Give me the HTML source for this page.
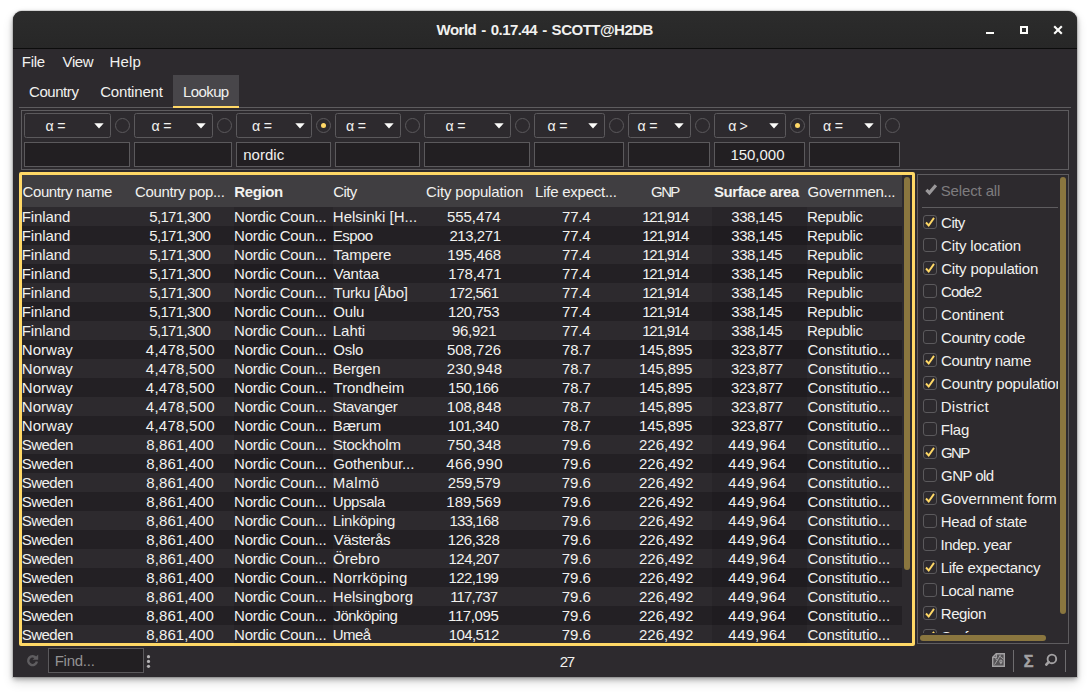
<!DOCTYPE html>
<html lang="en"><head><meta charset="utf-8"><title>World - 0.17.44 - SCOTT@H2DB</title>
<style>
html,body{margin:0;padding:0;}
body{width:1090px;height:693px;overflow:hidden;background:#fff;position:relative;
 font-family:"Liberation Sans","DejaVu Sans",sans-serif;font-size:15px;color:#f1f1ef;}
.t{position:absolute;white-space:pre;line-height:20px;height:20px;}
.win{position:absolute;left:13px;top:11px;width:1064px;height:666px;background:#2d2a2e;border-radius:9px 9px 0 0;
 box-shadow:0 0 0 1px rgba(0,0,0,.10),0 2px 5px rgba(0,0,0,.32),0 5px 11px rgba(0,0,0,.16);}
.tb{position:absolute;left:13px;top:11px;width:1064px;height:37px;border-radius:9px 9px 0 0;
 background:linear-gradient(#2c2c2c,#272727);border-bottom:1px solid #0c0c0c;}
.combo{box-sizing:border-box;border:1px solid #5b595c;border-radius:2.5px;background:#2d2a2e;}
.tf{box-sizing:border-box;border:1px solid #5b595c;background:#221f22;}
.radio{box-sizing:border-box;border:1px solid #5b595c;border-radius:50%;background:#2d2a2e;}
.cb{box-sizing:border-box;border:1px solid #5b595c;border-radius:3px;background:#2d2a2e;}
.clip{position:absolute;overflow:hidden;}
.sg{-webkit-text-stroke:0.5px #a3a1a3;}
svg{position:absolute;overflow:visible;}
</style></head><body>

<div class="win"></div><div class="tb"></div>
<header class="titlebar">
<div class="t" style="left:436.5px;top:20px;word-spacing:1.3px;font-weight:bold;letter-spacing:-0.50px">World - 0.17.44 - SCOTT@H2DB</div>
<div class="" style="position:absolute;left:986px;top:32px;width:8px;height:2px;background:#fcfcfa"></div>
<div class="" style="position:absolute;left:1020px;top:26px;width:8px;height:8px;box-sizing:border-box;border:2px solid #fcfcfa"></div>
<svg style="left:1053px;top:25px" width="10" height="10" viewBox="0 0 10 10"><path d="M1.2 1.2 L8.8 8.8 M8.8 1.2 L1.2 8.8" stroke="#fcfcfa" stroke-width="2.1" fill="none"/></svg>
</header>
<nav class="menubar">
<div class="t" style="left:21.7px;top:52px;letter-spacing:-0.22px">File</div>
<div class="t" style="left:62.5px;top:52px;letter-spacing:-0.35px">View</div>
<div class="t" style="left:109.5px;top:52px;letter-spacing:0.20px">Help</div>
</nav>
<div class="tabs">
<div class="" style="position:absolute;left:173px;top:75px;width:66px;height:33px;background:#48464a"></div>
<div class="" style="position:absolute;left:19px;top:107px;width:1052px;height:1px;background:#5e5c5f"></div>
<div class="" style="position:absolute;left:173px;top:106px;width:66px;height:2px;background:#ffd866"></div>
<div class="t" style="left:29.0px;top:82px;letter-spacing:-0.44px">Country</div>
<div class="t" style="left:100.2px;top:82px;letter-spacing:-0.19px">Continent</div>
<div class="t" style="left:183.1px;top:82px;letter-spacing:-0.62px">Lookup</div>
</div>
<section class="filters">
<div class="" style="position:absolute;left:21px;top:110px;width:1048px;height:60px;box-sizing:border-box;border:1px solid #5e5c5f"></div>
<div class="combo" style="position:absolute;left:24px;top:113px;width:87px;height:25px;"></div>
<div class="t" style="left:45.6px;top:115.6px;font-size:14.2px;word-spacing:-0.39px">α =</div>
<svg style="left:93.5px;top:123px" width="10" height="6" viewBox="0 0 10 6"><path d="M0.3 0.2 L9.7 0.2 L5 5.4 Z" fill="#fcfcfa"/></svg>
<div class="radio" style="position:absolute;left:115px;top:118px;width:15px;height:15px;"></div>
<div class="tf" style="position:absolute;left:24px;top:142px;width:106px;height:25px;"></div>
<div class="combo" style="position:absolute;left:134px;top:113px;width:79px;height:25px;"></div>
<div class="t" style="left:151.6px;top:115.6px;font-size:14.2px;word-spacing:-0.39px">α =</div>
<svg style="left:195.5px;top:123px" width="10" height="6" viewBox="0 0 10 6"><path d="M0.3 0.2 L9.7 0.2 L5 5.4 Z" fill="#fcfcfa"/></svg>
<div class="radio" style="position:absolute;left:217px;top:118px;width:15px;height:15px;"></div>
<div class="tf" style="position:absolute;left:134px;top:142px;width:98px;height:25px;"></div>
<div class="combo" style="position:absolute;left:236px;top:113px;width:76px;height:25px;"></div>
<div class="t" style="left:252.1px;top:115.6px;font-size:14.2px;word-spacing:-0.39px">α =</div>
<svg style="left:294.5px;top:123px" width="10" height="6" viewBox="0 0 10 6"><path d="M0.3 0.2 L9.7 0.2 L5 5.4 Z" fill="#fcfcfa"/></svg>
<div class="radio" style="position:absolute;left:316px;top:118px;width:15px;height:15px;"></div>
<div class="" style="position:absolute;left:320.8px;top:122.8px;width:5.4px;height:5.4px;background:#ffd866;border-radius:50%"></div>
<div class="tf" style="position:absolute;left:236px;top:142px;width:95px;height:25px;"></div>
<div class="combo" style="position:absolute;left:335px;top:113px;width:66px;height:25px;"></div>
<div class="t" style="left:346.1px;top:115.6px;font-size:14.2px;word-spacing:-0.39px">α =</div>
<svg style="left:383.5px;top:123px" width="10" height="6" viewBox="0 0 10 6"><path d="M0.3 0.2 L9.7 0.2 L5 5.4 Z" fill="#fcfcfa"/></svg>
<div class="radio" style="position:absolute;left:405px;top:118px;width:15px;height:15px;"></div>
<div class="tf" style="position:absolute;left:335px;top:142px;width:85px;height:25px;"></div>
<div class="combo" style="position:absolute;left:424px;top:113px;width:87px;height:25px;"></div>
<div class="t" style="left:445.6px;top:115.6px;font-size:14.2px;word-spacing:-0.39px">α =</div>
<svg style="left:493.5px;top:123px" width="10" height="6" viewBox="0 0 10 6"><path d="M0.3 0.2 L9.7 0.2 L5 5.4 Z" fill="#fcfcfa"/></svg>
<div class="radio" style="position:absolute;left:515px;top:118px;width:15px;height:15px;"></div>
<div class="tf" style="position:absolute;left:424px;top:142px;width:106px;height:25px;"></div>
<div class="combo" style="position:absolute;left:534px;top:113px;width:71px;height:25px;"></div>
<div class="t" style="left:547.6px;top:115.6px;font-size:14.2px;word-spacing:-0.39px">α =</div>
<svg style="left:587.5px;top:123px" width="10" height="6" viewBox="0 0 10 6"><path d="M0.3 0.2 L9.7 0.2 L5 5.4 Z" fill="#fcfcfa"/></svg>
<div class="radio" style="position:absolute;left:609px;top:118px;width:15px;height:15px;"></div>
<div class="tf" style="position:absolute;left:534px;top:142px;width:90px;height:25px;"></div>
<div class="combo" style="position:absolute;left:628px;top:113px;width:63px;height:25px;"></div>
<div class="t" style="left:637.6px;top:115.6px;font-size:14.2px;word-spacing:-0.39px">α =</div>
<svg style="left:673.5px;top:123px" width="10" height="6" viewBox="0 0 10 6"><path d="M0.3 0.2 L9.7 0.2 L5 5.4 Z" fill="#fcfcfa"/></svg>
<div class="radio" style="position:absolute;left:695px;top:118px;width:15px;height:15px;"></div>
<div class="tf" style="position:absolute;left:628px;top:142px;width:82px;height:25px;"></div>
<div class="combo" style="position:absolute;left:714px;top:113px;width:72px;height:25px;"></div>
<div class="t" style="left:728.2px;top:115.6px;font-size:14.2px;word-spacing:-0.79px">α &gt;</div>
<svg style="left:768.5px;top:123px" width="10" height="6" viewBox="0 0 10 6"><path d="M0.3 0.2 L9.7 0.2 L5 5.4 Z" fill="#fcfcfa"/></svg>
<div class="radio" style="position:absolute;left:790px;top:118px;width:15px;height:15px;"></div>
<div class="" style="position:absolute;left:794.8px;top:122.8px;width:5.4px;height:5.4px;background:#ffd866;border-radius:50%"></div>
<div class="tf" style="position:absolute;left:714px;top:142px;width:91px;height:25px;"></div>
<div class="combo" style="position:absolute;left:809px;top:113px;width:72px;height:25px;"></div>
<div class="t" style="left:823.1px;top:115.6px;font-size:14.2px;word-spacing:-0.39px">α =</div>
<svg style="left:863.5px;top:123px" width="10" height="6" viewBox="0 0 10 6"><path d="M0.3 0.2 L9.7 0.2 L5 5.4 Z" fill="#fcfcfa"/></svg>
<div class="radio" style="position:absolute;left:885px;top:118px;width:15px;height:15px;"></div>
<div class="tf" style="position:absolute;left:809px;top:142px;width:91px;height:25px;"></div>
<div class="t" style="left:243.2px;top:144.6px;letter-spacing:0.03px">nordic</div>
<div class="t" style="left:730.4px;top:144.6px;letter-spacing:-0.02px">150,000</div>
</section>
<section class="table">
<div class="" style="position:absolute;left:19px;top:172px;width:896px;height:474px;box-sizing:border-box;border:3px solid #ffd866;border-radius:2px;background:#2d2a2e"></div>
<div class="clip" style="left:22px;top:175px;width:890px;height:468px;">
<div class="" style="position:absolute;left:0px;top:0px;width:880px;height:32px;background:#403e41"></div>
<div class="" style="position:absolute;left:0px;top:32px;width:880px;height:19px;background:#2d2a2e"></div>
<div class="" style="position:absolute;left:212px;top:32px;width:99px;height:19px;background:rgba(0,0,0,.10)"></div>
<div class="" style="position:absolute;left:690px;top:32px;width:95px;height:19px;background:rgba(0,0,0,.10)"></div>
<div class="" style="position:absolute;left:0px;top:51px;width:880px;height:19px;background:#232024"></div>
<div class="" style="position:absolute;left:212px;top:51px;width:99px;height:19px;background:rgba(0,0,0,.10)"></div>
<div class="" style="position:absolute;left:690px;top:51px;width:95px;height:19px;background:rgba(0,0,0,.10)"></div>
<div class="" style="position:absolute;left:0px;top:70px;width:880px;height:19px;background:#2d2a2e"></div>
<div class="" style="position:absolute;left:212px;top:70px;width:99px;height:19px;background:rgba(0,0,0,.10)"></div>
<div class="" style="position:absolute;left:690px;top:70px;width:95px;height:19px;background:rgba(0,0,0,.10)"></div>
<div class="" style="position:absolute;left:0px;top:89px;width:880px;height:19px;background:#232024"></div>
<div class="" style="position:absolute;left:212px;top:89px;width:99px;height:19px;background:rgba(0,0,0,.10)"></div>
<div class="" style="position:absolute;left:690px;top:89px;width:95px;height:19px;background:rgba(0,0,0,.10)"></div>
<div class="" style="position:absolute;left:0px;top:108px;width:880px;height:19px;background:#2d2a2e"></div>
<div class="" style="position:absolute;left:212px;top:108px;width:99px;height:19px;background:rgba(0,0,0,.10)"></div>
<div class="" style="position:absolute;left:690px;top:108px;width:95px;height:19px;background:rgba(0,0,0,.10)"></div>
<div class="" style="position:absolute;left:0px;top:127px;width:880px;height:19px;background:#232024"></div>
<div class="" style="position:absolute;left:212px;top:127px;width:99px;height:19px;background:rgba(0,0,0,.10)"></div>
<div class="" style="position:absolute;left:690px;top:127px;width:95px;height:19px;background:rgba(0,0,0,.10)"></div>
<div class="" style="position:absolute;left:0px;top:146px;width:880px;height:19px;background:#2d2a2e"></div>
<div class="" style="position:absolute;left:212px;top:146px;width:99px;height:19px;background:rgba(0,0,0,.10)"></div>
<div class="" style="position:absolute;left:690px;top:146px;width:95px;height:19px;background:rgba(0,0,0,.10)"></div>
<div class="" style="position:absolute;left:0px;top:165px;width:880px;height:19px;background:#232024"></div>
<div class="" style="position:absolute;left:212px;top:165px;width:99px;height:19px;background:rgba(0,0,0,.10)"></div>
<div class="" style="position:absolute;left:690px;top:165px;width:95px;height:19px;background:rgba(0,0,0,.10)"></div>
<div class="" style="position:absolute;left:0px;top:184px;width:880px;height:19px;background:#2d2a2e"></div>
<div class="" style="position:absolute;left:212px;top:184px;width:99px;height:19px;background:rgba(0,0,0,.10)"></div>
<div class="" style="position:absolute;left:690px;top:184px;width:95px;height:19px;background:rgba(0,0,0,.10)"></div>
<div class="" style="position:absolute;left:0px;top:203px;width:880px;height:19px;background:#232024"></div>
<div class="" style="position:absolute;left:212px;top:203px;width:99px;height:19px;background:rgba(0,0,0,.10)"></div>
<div class="" style="position:absolute;left:690px;top:203px;width:95px;height:19px;background:rgba(0,0,0,.10)"></div>
<div class="" style="position:absolute;left:0px;top:222px;width:880px;height:19px;background:#2d2a2e"></div>
<div class="" style="position:absolute;left:212px;top:222px;width:99px;height:19px;background:rgba(0,0,0,.10)"></div>
<div class="" style="position:absolute;left:690px;top:222px;width:95px;height:19px;background:rgba(0,0,0,.10)"></div>
<div class="" style="position:absolute;left:0px;top:241px;width:880px;height:19px;background:#232024"></div>
<div class="" style="position:absolute;left:212px;top:241px;width:99px;height:19px;background:rgba(0,0,0,.10)"></div>
<div class="" style="position:absolute;left:690px;top:241px;width:95px;height:19px;background:rgba(0,0,0,.10)"></div>
<div class="" style="position:absolute;left:0px;top:260px;width:880px;height:19px;background:#2d2a2e"></div>
<div class="" style="position:absolute;left:212px;top:260px;width:99px;height:19px;background:rgba(0,0,0,.10)"></div>
<div class="" style="position:absolute;left:690px;top:260px;width:95px;height:19px;background:rgba(0,0,0,.10)"></div>
<div class="" style="position:absolute;left:0px;top:279px;width:880px;height:19px;background:#232024"></div>
<div class="" style="position:absolute;left:212px;top:279px;width:99px;height:19px;background:rgba(0,0,0,.10)"></div>
<div class="" style="position:absolute;left:690px;top:279px;width:95px;height:19px;background:rgba(0,0,0,.10)"></div>
<div class="" style="position:absolute;left:0px;top:298px;width:880px;height:19px;background:#2d2a2e"></div>
<div class="" style="position:absolute;left:212px;top:298px;width:99px;height:19px;background:rgba(0,0,0,.10)"></div>
<div class="" style="position:absolute;left:690px;top:298px;width:95px;height:19px;background:rgba(0,0,0,.10)"></div>
<div class="" style="position:absolute;left:0px;top:317px;width:880px;height:19px;background:#232024"></div>
<div class="" style="position:absolute;left:212px;top:317px;width:99px;height:19px;background:rgba(0,0,0,.10)"></div>
<div class="" style="position:absolute;left:690px;top:317px;width:95px;height:19px;background:rgba(0,0,0,.10)"></div>
<div class="" style="position:absolute;left:0px;top:336px;width:880px;height:19px;background:#2d2a2e"></div>
<div class="" style="position:absolute;left:212px;top:336px;width:99px;height:19px;background:rgba(0,0,0,.10)"></div>
<div class="" style="position:absolute;left:690px;top:336px;width:95px;height:19px;background:rgba(0,0,0,.10)"></div>
<div class="" style="position:absolute;left:0px;top:355px;width:880px;height:19px;background:#232024"></div>
<div class="" style="position:absolute;left:212px;top:355px;width:99px;height:19px;background:rgba(0,0,0,.10)"></div>
<div class="" style="position:absolute;left:690px;top:355px;width:95px;height:19px;background:rgba(0,0,0,.10)"></div>
<div class="" style="position:absolute;left:0px;top:374px;width:880px;height:19px;background:#2d2a2e"></div>
<div class="" style="position:absolute;left:212px;top:374px;width:99px;height:19px;background:rgba(0,0,0,.10)"></div>
<div class="" style="position:absolute;left:690px;top:374px;width:95px;height:19px;background:rgba(0,0,0,.10)"></div>
<div class="" style="position:absolute;left:0px;top:393px;width:880px;height:19px;background:#232024"></div>
<div class="" style="position:absolute;left:212px;top:393px;width:99px;height:19px;background:rgba(0,0,0,.10)"></div>
<div class="" style="position:absolute;left:690px;top:393px;width:95px;height:19px;background:rgba(0,0,0,.10)"></div>
<div class="" style="position:absolute;left:0px;top:412px;width:880px;height:19px;background:#2d2a2e"></div>
<div class="" style="position:absolute;left:212px;top:412px;width:99px;height:19px;background:rgba(0,0,0,.10)"></div>
<div class="" style="position:absolute;left:690px;top:412px;width:95px;height:19px;background:rgba(0,0,0,.10)"></div>
<div class="" style="position:absolute;left:0px;top:431px;width:880px;height:19px;background:#232024"></div>
<div class="" style="position:absolute;left:212px;top:431px;width:99px;height:19px;background:rgba(0,0,0,.10)"></div>
<div class="" style="position:absolute;left:690px;top:431px;width:95px;height:19px;background:rgba(0,0,0,.10)"></div>
<div class="" style="position:absolute;left:0px;top:450px;width:880px;height:19px;background:#2d2a2e"></div>
<div class="" style="position:absolute;left:212px;top:450px;width:99px;height:19px;background:rgba(0,0,0,.10)"></div>
<div class="" style="position:absolute;left:690px;top:450px;width:95px;height:19px;background:rgba(0,0,0,.10)"></div>
<div class="t" style="left:0.5px;top:7.3px;letter-spacing:-0.39px">Country name</div>
<div class="t" style="left:113.0px;top:7.3px;letter-spacing:-0.34px">Country pop...</div>
<div class="t" style="left:212.3px;top:7.3px;font-weight:bold;letter-spacing:-0.41px">Region</div>
<div class="t" style="left:311.3px;top:7.3px;letter-spacing:-0.64px">City</div>
<div class="t" style="left:404.1px;top:7.3px;letter-spacing:-0.15px">City population</div>
<div class="t" style="left:513.1px;top:7.3px;letter-spacing:-0.25px">Life expect...</div>
<div class="t" style="left:629.1px;top:7.3px;letter-spacing:-1.61px">GNP</div>
<div class="t" style="left:692.0px;top:7.3px;font-weight:bold;letter-spacing:-0.43px">Surface area</div>
<div class="t" style="left:785.6px;top:7.3px;letter-spacing:-0.27px">Governmen...</div>
<div class="t" style="left:-0.2px;top:31.5px;letter-spacing:-0.12px">Finland</div>
<div class="t" style="left:127.2px;top:31.5px;letter-spacing:-0.65px">5,171,300</div>
<div class="t" style="left:212.1px;top:31.5px;letter-spacing:-0.26px">Nordic Coun...</div>
<div class="t" style="left:310.8px;top:31.5px;letter-spacing:0.01px">Helsinki [H...</div>
<div class="t" style="left:425.1px;top:31.5px;letter-spacing:-0.10px">555,474</div>
<div class="t" style="left:540.1px;top:31.5px;letter-spacing:-0.26px">77.4</div>
<div class="t" style="left:620.2px;top:31.5px;letter-spacing:-1.17px">121,914</div>
<div class="t" style="left:709.3px;top:31.5px;letter-spacing:-0.47px">338,145</div>
<div class="t" style="left:785.1px;top:31.5px;letter-spacing:-0.36px">Republic</div>
<div class="t" style="left:-0.2px;top:50.5px;letter-spacing:-0.12px">Finland</div>
<div class="t" style="left:127.2px;top:50.5px;letter-spacing:-0.65px">5,171,300</div>
<div class="t" style="left:212.1px;top:50.5px;letter-spacing:-0.26px">Nordic Coun...</div>
<div class="t" style="left:310.8px;top:50.5px;letter-spacing:-0.54px">Espoo</div>
<div class="t" style="left:427.4px;top:50.5px;letter-spacing:-0.44px">213,271</div>
<div class="t" style="left:540.1px;top:50.5px;letter-spacing:-0.26px">77.4</div>
<div class="t" style="left:620.2px;top:50.5px;letter-spacing:-1.17px">121,914</div>
<div class="t" style="left:709.3px;top:50.5px;letter-spacing:-0.47px">338,145</div>
<div class="t" style="left:785.1px;top:50.5px;letter-spacing:-0.36px">Republic</div>
<div class="t" style="left:-0.2px;top:69.5px;letter-spacing:-0.12px">Finland</div>
<div class="t" style="left:127.2px;top:69.5px;letter-spacing:-0.65px">5,171,300</div>
<div class="t" style="left:212.1px;top:69.5px;letter-spacing:-0.26px">Nordic Coun...</div>
<div class="t" style="left:311.6px;top:69.5px;letter-spacing:-0.09px">Tampere</div>
<div class="t" style="left:425.2px;top:69.5px;letter-spacing:-0.06px">195,468</div>
<div class="t" style="left:540.1px;top:69.5px;letter-spacing:-0.26px">77.4</div>
<div class="t" style="left:620.2px;top:69.5px;letter-spacing:-1.17px">121,914</div>
<div class="t" style="left:709.3px;top:69.5px;letter-spacing:-0.47px">338,145</div>
<div class="t" style="left:785.1px;top:69.5px;letter-spacing:-0.36px">Republic</div>
<div class="t" style="left:-0.2px;top:88.5px;letter-spacing:-0.12px">Finland</div>
<div class="t" style="left:127.2px;top:88.5px;letter-spacing:-0.65px">5,171,300</div>
<div class="t" style="left:212.1px;top:88.5px;letter-spacing:-0.26px">Nordic Coun...</div>
<div class="t" style="left:311.7px;top:88.5px;letter-spacing:-0.20px">Vantaa</div>
<div class="t" style="left:426.2px;top:88.5px;letter-spacing:-0.14px">178,471</div>
<div class="t" style="left:540.1px;top:88.5px;letter-spacing:-0.26px">77.4</div>
<div class="t" style="left:620.2px;top:88.5px;letter-spacing:-1.17px">121,914</div>
<div class="t" style="left:709.3px;top:88.5px;letter-spacing:-0.47px">338,145</div>
<div class="t" style="left:785.1px;top:88.5px;letter-spacing:-0.36px">Republic</div>
<div class="t" style="left:-0.2px;top:107.5px;letter-spacing:-0.12px">Finland</div>
<div class="t" style="left:127.2px;top:107.5px;letter-spacing:-0.65px">5,171,300</div>
<div class="t" style="left:212.1px;top:107.5px;letter-spacing:-0.26px">Nordic Coun...</div>
<div class="t" style="left:311.6px;top:107.5px;letter-spacing:-0.27px">Turku [Åbo]</div>
<div class="t" style="left:427.2px;top:107.5px;letter-spacing:-0.73px">172,561</div>
<div class="t" style="left:540.1px;top:107.5px;letter-spacing:-0.26px">77.4</div>
<div class="t" style="left:620.2px;top:107.5px;letter-spacing:-1.17px">121,914</div>
<div class="t" style="left:709.3px;top:107.5px;letter-spacing:-0.47px">338,145</div>
<div class="t" style="left:785.1px;top:107.5px;letter-spacing:-0.36px">Republic</div>
<div class="t" style="left:-0.2px;top:126.5px;letter-spacing:-0.12px">Finland</div>
<div class="t" style="left:127.2px;top:126.5px;letter-spacing:-0.65px">5,171,300</div>
<div class="t" style="left:212.1px;top:126.5px;letter-spacing:-0.26px">Nordic Coun...</div>
<div class="t" style="left:311.2px;top:126.5px;letter-spacing:-0.14px">Oulu</div>
<div class="t" style="left:426.0px;top:126.5px;letter-spacing:-0.45px">120,753</div>
<div class="t" style="left:540.1px;top:126.5px;letter-spacing:-0.26px">77.4</div>
<div class="t" style="left:620.2px;top:126.5px;letter-spacing:-1.17px">121,914</div>
<div class="t" style="left:709.3px;top:126.5px;letter-spacing:-0.47px">338,145</div>
<div class="t" style="left:785.1px;top:126.5px;letter-spacing:-0.36px">Republic</div>
<div class="t" style="left:-0.2px;top:145.5px;letter-spacing:-0.12px">Finland</div>
<div class="t" style="left:127.2px;top:145.5px;letter-spacing:-0.65px">5,171,300</div>
<div class="t" style="left:212.1px;top:145.5px;letter-spacing:-0.26px">Nordic Coun...</div>
<div class="t" style="left:310.8px;top:145.5px;letter-spacing:-0.03px">Lahti</div>
<div class="t" style="left:429.9px;top:145.5px;letter-spacing:-0.25px">96,921</div>
<div class="t" style="left:540.1px;top:145.5px;letter-spacing:-0.26px">77.4</div>
<div class="t" style="left:620.2px;top:145.5px;letter-spacing:-1.17px">121,914</div>
<div class="t" style="left:709.3px;top:145.5px;letter-spacing:-0.47px">338,145</div>
<div class="t" style="left:785.1px;top:145.5px;letter-spacing:-0.36px">Republic</div>
<div class="t" style="left:-0.2px;top:164.5px;letter-spacing:0.02px">Norway</div>
<div class="t" style="left:123.8px;top:164.5px;letter-spacing:0.27px">4,478,500</div>
<div class="t" style="left:212.1px;top:164.5px;letter-spacing:-0.26px">Nordic Coun...</div>
<div class="t" style="left:311.2px;top:164.5px;letter-spacing:-0.22px">Oslo</div>
<div class="t" style="left:424.9px;top:164.5px">508,726</div>
<div class="t" style="left:540.0px;top:164.5px;letter-spacing:-0.08px">78.7</div>
<div class="t" style="left:617.0px;top:164.5px;letter-spacing:-0.14px">145,895</div>
<div class="t" style="left:709.0px;top:164.5px;letter-spacing:-0.34px">323,877</div>
<div class="t" style="left:785.5px;top:164.5px;letter-spacing:-0.06px">Constitutio...</div>
<div class="t" style="left:-0.2px;top:183.5px;letter-spacing:0.02px">Norway</div>
<div class="t" style="left:123.8px;top:183.5px;letter-spacing:0.27px">4,478,500</div>
<div class="t" style="left:212.1px;top:183.5px;letter-spacing:-0.26px">Nordic Coun...</div>
<div class="t" style="left:310.8px;top:183.5px;letter-spacing:-0.13px">Bergen</div>
<div class="t" style="left:424.7px;top:183.5px;letter-spacing:0.18px">230,948</div>
<div class="t" style="left:540.0px;top:183.5px;letter-spacing:-0.08px">78.7</div>
<div class="t" style="left:617.0px;top:183.5px;letter-spacing:-0.14px">145,895</div>
<div class="t" style="left:709.0px;top:183.5px;letter-spacing:-0.34px">323,877</div>
<div class="t" style="left:785.5px;top:183.5px;letter-spacing:-0.06px">Constitutio...</div>
<div class="t" style="left:-0.2px;top:202.5px;letter-spacing:0.02px">Norway</div>
<div class="t" style="left:123.8px;top:202.5px;letter-spacing:0.27px">4,478,500</div>
<div class="t" style="left:212.1px;top:202.5px;letter-spacing:-0.26px">Nordic Coun...</div>
<div class="t" style="left:311.6px;top:202.5px;letter-spacing:-0.06px">Trondheim</div>
<div class="t" style="left:426.0px;top:202.5px;letter-spacing:-0.55px">150,166</div>
<div class="t" style="left:540.0px;top:202.5px;letter-spacing:-0.08px">78.7</div>
<div class="t" style="left:617.0px;top:202.5px;letter-spacing:-0.14px">145,895</div>
<div class="t" style="left:709.0px;top:202.5px;letter-spacing:-0.34px">323,877</div>
<div class="t" style="left:785.5px;top:202.5px;letter-spacing:-0.06px">Constitutio...</div>
<div class="t" style="left:-0.2px;top:221.5px;letter-spacing:0.02px">Norway</div>
<div class="t" style="left:123.8px;top:221.5px;letter-spacing:0.27px">4,478,500</div>
<div class="t" style="left:212.1px;top:221.5px;letter-spacing:-0.26px">Nordic Coun...</div>
<div class="t" style="left:310.7px;top:221.5px;letter-spacing:-0.43px">Stavanger</div>
<div class="t" style="left:424.8px;top:221.5px;letter-spacing:0.04px">108,848</div>
<div class="t" style="left:540.0px;top:221.5px;letter-spacing:-0.08px">78.7</div>
<div class="t" style="left:617.0px;top:221.5px;letter-spacing:-0.14px">145,895</div>
<div class="t" style="left:709.0px;top:221.5px;letter-spacing:-0.34px">323,877</div>
<div class="t" style="left:785.5px;top:221.5px;letter-spacing:-0.06px">Constitutio...</div>
<div class="t" style="left:-0.2px;top:240.5px;letter-spacing:0.02px">Norway</div>
<div class="t" style="left:123.8px;top:240.5px;letter-spacing:0.27px">4,478,500</div>
<div class="t" style="left:212.1px;top:240.5px;letter-spacing:-0.26px">Nordic Coun...</div>
<div class="t" style="left:310.8px;top:240.5px;letter-spacing:-0.16px">Bærum</div>
<div class="t" style="left:426.0px;top:240.5px;letter-spacing:-0.54px">101,340</div>
<div class="t" style="left:540.0px;top:240.5px;letter-spacing:-0.08px">78.7</div>
<div class="t" style="left:617.0px;top:240.5px;letter-spacing:-0.14px">145,895</div>
<div class="t" style="left:709.0px;top:240.5px;letter-spacing:-0.34px">323,877</div>
<div class="t" style="left:785.5px;top:240.5px;letter-spacing:-0.06px">Constitutio...</div>
<div class="t" style="left:-0.3px;top:259.5px;letter-spacing:-0.52px">Sweden</div>
<div class="t" style="left:124.3px;top:259.5px;letter-spacing:0.09px">8,861,400</div>
<div class="t" style="left:212.1px;top:259.5px;letter-spacing:-0.26px">Nordic Coun...</div>
<div class="t" style="left:310.7px;top:259.5px;letter-spacing:-0.22px">Stockholm</div>
<div class="t" style="left:425.1px;top:259.5px;letter-spacing:-0.03px">750,348</div>
<div class="t" style="left:539.7px;top:259.5px;letter-spacing:0.01px">79.6</div>
<div class="t" style="left:617.0px;top:259.5px;letter-spacing:0.01px">226,492</div>
<div class="t" style="left:706.3px;top:259.5px;letter-spacing:0.57px">449,964</div>
<div class="t" style="left:785.5px;top:259.5px;letter-spacing:-0.06px">Constitutio...</div>
<div class="t" style="left:-0.3px;top:278.5px;letter-spacing:-0.52px">Sweden</div>
<div class="t" style="left:124.3px;top:278.5px;letter-spacing:0.09px">8,861,400</div>
<div class="t" style="left:212.1px;top:278.5px;letter-spacing:-0.26px">Nordic Coun...</div>
<div class="t" style="left:311.2px;top:278.5px;letter-spacing:-0.13px">Gothenbur...</div>
<div class="t" style="left:424.3px;top:278.5px;letter-spacing:0.34px">466,990</div>
<div class="t" style="left:539.7px;top:278.5px;letter-spacing:0.01px">79.6</div>
<div class="t" style="left:617.0px;top:278.5px;letter-spacing:0.01px">226,492</div>
<div class="t" style="left:706.3px;top:278.5px;letter-spacing:0.57px">449,964</div>
<div class="t" style="left:785.5px;top:278.5px;letter-spacing:-0.06px">Constitutio...</div>
<div class="t" style="left:-0.3px;top:297.5px;letter-spacing:-0.52px">Sweden</div>
<div class="t" style="left:124.3px;top:297.5px;letter-spacing:0.09px">8,861,400</div>
<div class="t" style="left:212.1px;top:297.5px;letter-spacing:-0.26px">Nordic Coun...</div>
<div class="t" style="left:310.8px;top:297.5px;letter-spacing:0.32px">Malmö</div>
<div class="t" style="left:425.8px;top:297.5px;letter-spacing:-0.22px">259,579</div>
<div class="t" style="left:539.7px;top:297.5px;letter-spacing:0.01px">79.6</div>
<div class="t" style="left:617.0px;top:297.5px;letter-spacing:0.01px">226,492</div>
<div class="t" style="left:706.3px;top:297.5px;letter-spacing:0.57px">449,964</div>
<div class="t" style="left:785.5px;top:297.5px;letter-spacing:-0.06px">Constitutio...</div>
<div class="t" style="left:-0.3px;top:316.5px;letter-spacing:-0.52px">Sweden</div>
<div class="t" style="left:124.3px;top:316.5px;letter-spacing:0.09px">8,861,400</div>
<div class="t" style="left:212.1px;top:316.5px;letter-spacing:-0.26px">Nordic Coun...</div>
<div class="t" style="left:310.7px;top:316.5px;letter-spacing:-0.39px">Uppsala</div>
<div class="t" style="left:424.2px;top:316.5px;letter-spacing:0.10px">189,569</div>
<div class="t" style="left:539.7px;top:316.5px;letter-spacing:0.01px">79.6</div>
<div class="t" style="left:617.0px;top:316.5px;letter-spacing:0.01px">226,492</div>
<div class="t" style="left:706.3px;top:316.5px;letter-spacing:0.57px">449,964</div>
<div class="t" style="left:785.5px;top:316.5px;letter-spacing:-0.06px">Constitutio...</div>
<div class="t" style="left:-0.3px;top:335.5px;letter-spacing:-0.52px">Sweden</div>
<div class="t" style="left:124.3px;top:335.5px;letter-spacing:0.09px">8,861,400</div>
<div class="t" style="left:212.1px;top:335.5px;letter-spacing:-0.26px">Nordic Coun...</div>
<div class="t" style="left:310.8px;top:335.5px;letter-spacing:-0.21px">Linköping</div>
<div class="t" style="left:427.4px;top:335.5px;letter-spacing:-0.77px">133,168</div>
<div class="t" style="left:539.7px;top:335.5px;letter-spacing:0.01px">79.6</div>
<div class="t" style="left:617.0px;top:335.5px;letter-spacing:0.01px">226,492</div>
<div class="t" style="left:706.3px;top:335.5px;letter-spacing:0.57px">449,964</div>
<div class="t" style="left:785.5px;top:335.5px;letter-spacing:-0.06px">Constitutio...</div>
<div class="t" style="left:-0.3px;top:354.5px;letter-spacing:-0.52px">Sweden</div>
<div class="t" style="left:124.3px;top:354.5px;letter-spacing:0.09px">8,861,400</div>
<div class="t" style="left:212.1px;top:354.5px;letter-spacing:-0.26px">Nordic Coun...</div>
<div class="t" style="left:311.7px;top:354.5px;letter-spacing:-0.35px">Västerås</div>
<div class="t" style="left:425.7px;top:354.5px;letter-spacing:-0.35px">126,328</div>
<div class="t" style="left:539.7px;top:354.5px;letter-spacing:0.01px">79.6</div>
<div class="t" style="left:617.0px;top:354.5px;letter-spacing:0.01px">226,492</div>
<div class="t" style="left:706.3px;top:354.5px;letter-spacing:0.57px">449,964</div>
<div class="t" style="left:785.5px;top:354.5px;letter-spacing:-0.06px">Constitutio...</div>
<div class="t" style="left:-0.3px;top:373.5px;letter-spacing:-0.52px">Sweden</div>
<div class="t" style="left:124.3px;top:373.5px;letter-spacing:0.09px">8,861,400</div>
<div class="t" style="left:212.1px;top:373.5px;letter-spacing:-0.26px">Nordic Coun...</div>
<div class="t" style="left:311.1px;top:373.5px;letter-spacing:-0.01px">Örebro</div>
<div class="t" style="left:426.4px;top:373.5px;letter-spacing:-0.47px">124,207</div>
<div class="t" style="left:539.7px;top:373.5px;letter-spacing:0.01px">79.6</div>
<div class="t" style="left:617.0px;top:373.5px;letter-spacing:0.01px">226,492</div>
<div class="t" style="left:706.3px;top:373.5px;letter-spacing:0.57px">449,964</div>
<div class="t" style="left:785.5px;top:373.5px;letter-spacing:-0.06px">Constitutio...</div>
<div class="t" style="left:-0.3px;top:392.5px;letter-spacing:-0.52px">Sweden</div>
<div class="t" style="left:124.3px;top:392.5px;letter-spacing:0.09px">8,861,400</div>
<div class="t" style="left:212.1px;top:392.5px;letter-spacing:-0.26px">Nordic Coun...</div>
<div class="t" style="left:310.8px;top:392.5px;letter-spacing:0.12px">Norrköping</div>
<div class="t" style="left:426.6px;top:392.5px;letter-spacing:-0.65px">122,199</div>
<div class="t" style="left:539.7px;top:392.5px;letter-spacing:0.01px">79.6</div>
<div class="t" style="left:617.0px;top:392.5px;letter-spacing:0.01px">226,492</div>
<div class="t" style="left:706.3px;top:392.5px;letter-spacing:0.57px">449,964</div>
<div class="t" style="left:785.5px;top:392.5px;letter-spacing:-0.06px">Constitutio...</div>
<div class="t" style="left:-0.3px;top:411.5px;letter-spacing:-0.52px">Sweden</div>
<div class="t" style="left:124.3px;top:411.5px;letter-spacing:0.09px">8,861,400</div>
<div class="t" style="left:212.1px;top:411.5px;letter-spacing:-0.26px">Nordic Coun...</div>
<div class="t" style="left:310.8px;top:411.5px;letter-spacing:0.02px">Helsingborg</div>
<div class="t" style="left:428.2px;top:411.5px;letter-spacing:-0.87px">117,737</div>
<div class="t" style="left:539.7px;top:411.5px;letter-spacing:0.01px">79.6</div>
<div class="t" style="left:617.0px;top:411.5px;letter-spacing:0.01px">226,492</div>
<div class="t" style="left:706.3px;top:411.5px;letter-spacing:0.57px">449,964</div>
<div class="t" style="left:785.5px;top:411.5px;letter-spacing:-0.06px">Constitutio...</div>
<div class="t" style="left:-0.3px;top:430.5px;letter-spacing:-0.52px">Sweden</div>
<div class="t" style="left:124.3px;top:430.5px;letter-spacing:0.09px">8,861,400</div>
<div class="t" style="left:212.1px;top:430.5px;letter-spacing:-0.26px">Nordic Coun...</div>
<div class="t" style="left:311.4px;top:430.5px;letter-spacing:-0.49px">Jönköping</div>
<div class="t" style="left:426.1px;top:430.5px;letter-spacing:-0.40px">117,095</div>
<div class="t" style="left:539.7px;top:430.5px;letter-spacing:0.01px">79.6</div>
<div class="t" style="left:617.0px;top:430.5px;letter-spacing:0.01px">226,492</div>
<div class="t" style="left:706.3px;top:430.5px;letter-spacing:0.57px">449,964</div>
<div class="t" style="left:785.5px;top:430.5px;letter-spacing:-0.06px">Constitutio...</div>
<div class="t" style="left:-0.3px;top:449.5px;letter-spacing:-0.52px">Sweden</div>
<div class="t" style="left:124.3px;top:449.5px;letter-spacing:0.09px">8,861,400</div>
<div class="t" style="left:212.1px;top:449.5px;letter-spacing:-0.26px">Nordic Coun...</div>
<div class="t" style="left:310.7px;top:449.5px;letter-spacing:-0.53px">Umeå</div>
<div class="t" style="left:426.8px;top:449.5px;letter-spacing:-0.62px">104,512</div>
<div class="t" style="left:539.7px;top:449.5px;letter-spacing:0.01px">79.6</div>
<div class="t" style="left:617.0px;top:449.5px;letter-spacing:0.01px">226,492</div>
<div class="t" style="left:706.3px;top:449.5px;letter-spacing:0.57px">449,964</div>
<div class="t" style="left:785.5px;top:449.5px;letter-spacing:-0.06px">Constitutio...</div>
</div>
<div class="" style="position:absolute;left:904px;top:177px;width:6px;height:393px;background:#8a763f;border-radius:3px"></div>
</section>
<aside class="columns">
<div class="" style="position:absolute;left:917px;top:174px;width:152px;height:470px;box-sizing:border-box;border:1px solid #5e5c5f"></div>
<div class="clip" style="left:918px;top:175px;width:140px;height:458px;">
<svg style="left:7px;top:8px" width="13" height="12" viewBox="0 0 13 12"><path d="M1.4 6.9 L4.4 9.9 L10.9 2.2" stroke="#9a989a" stroke-width="3.2" fill="none"/></svg>
<div class="t" style="left:22.7px;top:6.3px;color:#7e7c7e;letter-spacing:-0.13px">Select all</div>
<div class="" style="position:absolute;left:4px;top:32px;width:136px;height:1px;background:#5e5c5f"></div>
<div class="cb" style="position:absolute;left:5px;top:40px;width:14px;height:14px;"></div>
<svg style="left:5px;top:40px" width="14" height="14" viewBox="0 0 14 14"><path d="M3.0 7.5 L5.7 10.5 L11.0 2.9" stroke="#ffd866" stroke-width="1.9" fill="none"/></svg>
<div class="t" style="left:23.1px;top:38px;letter-spacing:-0.54px">City</div>
<div class="cb" style="position:absolute;left:5px;top:63px;width:14px;height:14px;"></div>
<div class="t" style="left:23.0px;top:61px;letter-spacing:-0.13px">City location</div>
<div class="cb" style="position:absolute;left:5px;top:86px;width:14px;height:14px;"></div>
<svg style="left:5px;top:86px" width="14" height="14" viewBox="0 0 14 14"><path d="M3.0 7.5 L5.7 10.5 L11.0 2.9" stroke="#ffd866" stroke-width="1.9" fill="none"/></svg>
<div class="t" style="left:23.2px;top:84px;letter-spacing:-0.15px">City population</div>
<div class="cb" style="position:absolute;left:5px;top:109px;width:14px;height:14px;"></div>
<div class="t" style="left:23.0px;top:107px;letter-spacing:-0.78px">Code2</div>
<div class="cb" style="position:absolute;left:5px;top:132px;width:14px;height:14px;"></div>
<div class="t" style="left:23.1px;top:130px;letter-spacing:-0.19px">Continent</div>
<div class="cb" style="position:absolute;left:5px;top:155px;width:14px;height:14px;"></div>
<div class="t" style="left:23.0px;top:153px;letter-spacing:-0.45px">Country code</div>
<div class="cb" style="position:absolute;left:5px;top:178px;width:14px;height:14px;"></div>
<svg style="left:5px;top:178px" width="14" height="14" viewBox="0 0 14 14"><path d="M3.0 7.5 L5.7 10.5 L11.0 2.9" stroke="#ffd866" stroke-width="1.9" fill="none"/></svg>
<div class="t" style="left:23.1px;top:176px;letter-spacing:-0.37px">Country name</div>
<div class="cb" style="position:absolute;left:5px;top:201px;width:14px;height:14px;"></div>
<svg style="left:5px;top:201px" width="14" height="14" viewBox="0 0 14 14"><path d="M3.0 7.5 L5.7 10.5 L11.0 2.9" stroke="#ffd866" stroke-width="1.9" fill="none"/></svg>
<div class="t" style="left:23.0px;top:199px;letter-spacing:-0.18px">Country population</div>
<div class="cb" style="position:absolute;left:5px;top:224px;width:14px;height:14px;"></div>
<div class="t" style="left:22.7px;top:222px;letter-spacing:0.30px">District</div>
<div class="cb" style="position:absolute;left:5px;top:247px;width:14px;height:14px;"></div>
<div class="t" style="left:22.7px;top:245px;letter-spacing:-0.16px">Flag</div>
<div class="cb" style="position:absolute;left:5px;top:270px;width:14px;height:14px;"></div>
<svg style="left:5px;top:270px" width="14" height="14" viewBox="0 0 14 14"><path d="M3.0 7.5 L5.7 10.5 L11.0 2.9" stroke="#ffd866" stroke-width="1.9" fill="none"/></svg>
<div class="t" style="left:23.0px;top:268px;letter-spacing:-1.61px">GNP</div>
<div class="cb" style="position:absolute;left:5px;top:293px;width:14px;height:14px;"></div>
<div class="t" style="left:23.1px;top:291px;letter-spacing:-0.56px">GNP old</div>
<div class="cb" style="position:absolute;left:5px;top:316px;width:14px;height:14px;"></div>
<svg style="left:5px;top:316px" width="14" height="14" viewBox="0 0 14 14"><path d="M3.0 7.5 L5.7 10.5 L11.0 2.9" stroke="#ffd866" stroke-width="1.9" fill="none"/></svg>
<div class="t" style="left:23.1px;top:314px;letter-spacing:-0.07px">Government form</div>
<div class="cb" style="position:absolute;left:5px;top:339px;width:14px;height:14px;"></div>
<div class="t" style="left:22.7px;top:337px;letter-spacing:-0.23px">Head of state</div>
<div class="cb" style="position:absolute;left:5px;top:362px;width:14px;height:14px;"></div>
<div class="t" style="left:22.4px;top:360px;letter-spacing:-0.38px">Indep. year</div>
<div class="cb" style="position:absolute;left:5px;top:385px;width:14px;height:14px;"></div>
<svg style="left:5px;top:385px" width="14" height="14" viewBox="0 0 14 14"><path d="M3.0 7.5 L5.7 10.5 L11.0 2.9" stroke="#ffd866" stroke-width="1.9" fill="none"/></svg>
<div class="t" style="left:22.7px;top:383px;letter-spacing:-0.32px">Life expectancy</div>
<div class="cb" style="position:absolute;left:5px;top:408px;width:14px;height:14px;"></div>
<div class="t" style="left:22.7px;top:406px;letter-spacing:-0.47px">Local name</div>
<div class="cb" style="position:absolute;left:5px;top:431px;width:14px;height:14px;"></div>
<svg style="left:5px;top:431px" width="14" height="14" viewBox="0 0 14 14"><path d="M3.0 7.5 L5.7 10.5 L11.0 2.9" stroke="#ffd866" stroke-width="1.9" fill="none"/></svg>
<div class="t" style="left:22.7px;top:429px;letter-spacing:-0.38px">Region</div>
<div class="cb" style="position:absolute;left:5px;top:454px;width:14px;height:14px;"></div>
<svg style="left:5px;top:454px" width="14" height="14" viewBox="0 0 14 14"><path d="M3.0 7.5 L5.7 10.5 L11.0 2.9" stroke="#ffd866" stroke-width="1.9" fill="none"/></svg>
<div class="t" style="left:23.3px;top:452px;letter-spacing:-0.10px">Surface area</div>
</div>
<div class="" style="position:absolute;left:1060px;top:177px;width:6px;height:437px;background:#8a763f;border-radius:3px"></div>
<div class="" style="position:absolute;left:920px;top:635px;width:126px;height:6px;background:#8a763f;border-radius:3px"></div>
</aside>
<footer class="statusbar">
<svg style="left:26px;top:654px" width="13" height="13" viewBox="0 0 13 13"><path d="M10.2 4.2 A4.4 4.4 0 1 0 10.9 7.6" stroke="#5f5d60" stroke-width="2.4" fill="none"/><path d="M6.6 5.8 L12.2 5.8 L12.2 0.4 Z" fill="#5f5d60"/></svg>
<div class="tf" style="position:absolute;left:48px;top:648px;width:96px;height:25px;"></div>
<div class="t" style="left:54.7px;top:651px;color:#939293;letter-spacing:-0.25px">Find...</div>
<svg style="left:146px;top:654px" width="5" height="15" viewBox="0 0 5 15"><circle cx="2.5" cy="2.7" r="1.6" fill="#b5b3b5"/><circle cx="2.5" cy="7.45" r="1.6" fill="#b5b3b5"/><circle cx="2.5" cy="12.3" r="1.6" fill="#b5b3b5"/></svg>
<div class="t" style="left:559.8px;top:652px;letter-spacing:-1.41px">27</div>
<svg style="left:992px;top:653px" width="13" height="14" viewBox="0 0 13 14"><path d="M4.2 0.7 L12.3 0.7 L12.3 13.3 L0.7 13.3 L0.7 4.2 Z" stroke="#a3a1a3" stroke-width="1.4" fill="#555356"/><path d="M0.7 4.4 L4.4 4.4 L4.4 0.7" stroke="#a3a1a3" stroke-width="1.1" fill="none"/><path d="M2.6 11.6 L5.6 6.8 L3.2 5.6 M5.6 6.8 L8.6 1.6 M8 3.4 L11.6 6.2" stroke="#a3a1a3" stroke-width="1" fill="none"/><path d="M8.9 11.6 C7.6 9.6 7.3 8.9 7.3 8.2 A1.6 1.6 0 0 1 10.5 8.2 C10.5 8.9 10.2 9.6 8.9 11.6 Z" fill="#a3a1a3"/><circle cx="8.9" cy="8.2" r="0.6" fill="#555356"/></svg>
<div class="" style="position:absolute;left:1013px;top:650px;width:1px;height:22px;background:#6e6c6f"></div>
<div class="t sg" style="left:1023.8px;top:651px;color:#a3a1a3;font-weight:bold;font-size:16.2px">Σ</div>
<svg style="left:1045px;top:653px" width="13" height="14" viewBox="0 0 13 14"><circle cx="6.9" cy="5.9" r="4.3" stroke="#a3a1a3" stroke-width="1.9" fill="none"/><path d="M3.6 9.1 L1.3 11.6" stroke="#a3a1a3" stroke-width="2.7" stroke-linecap="round"/></svg>
<div class="" style="position:absolute;left:1065px;top:650px;width:1px;height:22px;background:#6e6c6f"></div>
</footer>
</body></html>
